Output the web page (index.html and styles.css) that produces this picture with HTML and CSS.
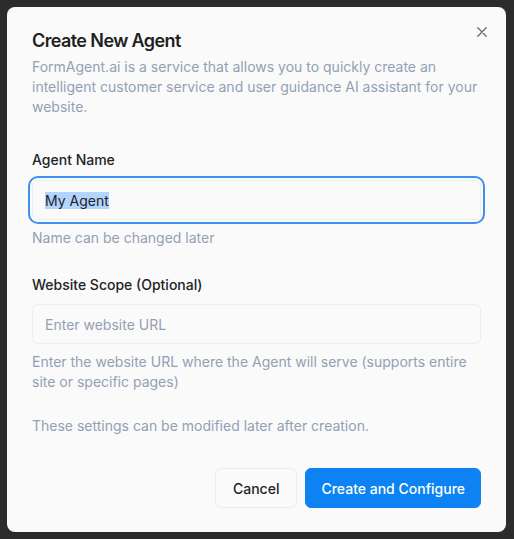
FILE: index.html
```html
<!DOCTYPE html>
<html lang="en">
<head>
<meta charset="utf-8">
<title>Create New Agent</title>
<link rel="stylesheet" href="styles.css">
</head>
<body>
<div class="dialog" role="dialog" aria-labelledby="dlg-title">
  <button class="close" aria-label="Close">
    <svg width="10" height="10" viewBox="0 0 10 10" fill="none" stroke="#6b6b6b" stroke-width="1.3" stroke-linecap="round"><path d="M0.8 0.8L9.2 9.2M9.2 0.8L0.8 9.2"/></svg>
  </button>
  <h2 class="title" id="dlg-title">Create New Agent</h2>
  <p class="desc">FormAgent.ai is a service that allows you to quickly create an intelligent customer service and user guidance AI assistant for your website.</p>

  <div class="field field-first">
    <label class="label">Agent Name</label>
    <div class="input input-focus"><span class="sel">My Agent</span></div>
    <p class="help">Name can be changed later</p>
  </div>

  <div class="field field-second">
    <label class="label">Website Scope (Optional)</label>
    <div class="input"><span class="placeholder">Enter website URL</span></div>
    <p class="help">Enter the website URL where the Agent will serve (supports entire site or specific pages)</p>
  </div>

  <p class="note">These settings can be modified later after creation.</p>

  <div class="actions">
    <button class="btn btn-cancel">Cancel</button>
    <button class="btn btn-primary">Create and Configure</button>
  </div>
</div>
</body>
</html>
```

FILE: styles.css
```css
* { box-sizing: border-box; }
html, body { margin: 0; padding: 0; }
body {
  background: #2c2c2c;
  width: 514px;
  height: 539px;
  overflow: hidden;
  font-family: Inter, "Liberation Sans", sans-serif;
  padding: 7px 8px 0 7px;
}
.dialog {
  position: relative;
  width: 499px;
  height: 525px;
  background: #fafafa;
  border-radius: 8px;
  padding: 20px 25px 24px 25px;
}
.close {
  position: absolute;
  top: 18px;
  right: 17px;
  width: 14px;
  height: 14px;
  padding: 0;
  border: 0;
  background: transparent;
  display: flex;
  align-items: center;
  justify-content: center;
}
.title {
  margin: 0;
  font-size: 18px;
  line-height: 28px;
  font-weight: 600;
  color: #1e1f22;
  letter-spacing: -0.6px;
}
.desc {
  margin: 2px 0 0 0;
  font-size: 14px;
  line-height: 20px;
  color: #93a0b4;
}
.field { display: flex; flex-direction: column; }
.field-first { margin-top: 33px; }
.field-second { margin-top: 27px; }
.label {
  font-size: 14px;
  line-height: 20px;
  font-weight: 500;
  color: #222326;
  margin-bottom: 10px;
}
.field-second .label { margin-bottom: 9px; }
.input {
  height: 40px;
  border: 1px solid #eeeeef;
  border-radius: 6px;
  background: #fafafa;
  padding: 0 12px;
  display: flex;
  align-items: center;
  font-size: 14px;
}
.input-focus {
  outline: 2px solid #3d8ff0;
  outline-offset: 2px;
}
.sel {
  background: #b3d4fc;
  color: #1f2329;
  line-height: 17px;
}
.placeholder { color: #94a0b4; }
.help {
  margin: 8px 0 0 0;
  font-size: 14px;
  line-height: 20px;
  color: #93a0b4;
}
.note {
  margin: 24px 0 0 0;
  font-size: 14px;
  line-height: 20px;
  color: #93a0b4;
}
.actions {
  margin-top: 32px;
  display: flex;
  justify-content: flex-end;
  gap: 8px;
}
.btn {
  height: 40px;
  padding: 0 15px;
  border-radius: 6px;
  font-family: inherit;
  font-size: 14px;
  font-weight: 500;
}
.btn-cancel {
  background: #fafafa;
  border: 1px solid #ececee;
  color: #222326;
  padding: 0 17px;
}
.btn-primary {
  background: #0d82f2;
  border: 1px solid #0d82f2;
  color: #ffffff;
}
```
